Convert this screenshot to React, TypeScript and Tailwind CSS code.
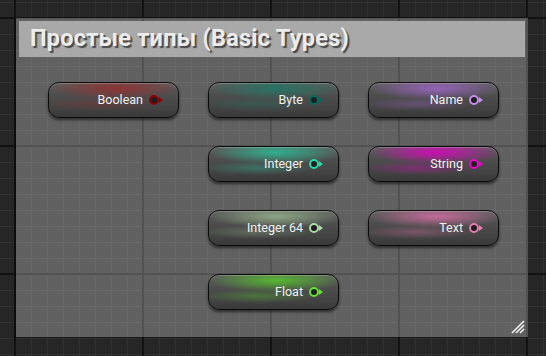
import React from "react";

type NodeDef = { label: string; glow: string; pin: string } | null;

const rows: NodeDef[][] = [
  [
    { label: "Boolean", glow: "150,45,45", pin: "#930000" },
    { label: "Byte", glow: "30,120,100", pin: "#006b5f" },
    { label: "Name", glow: "160,100,200", pin: "#c88cf2" },
  ],
  [
    null,
    { label: "Integer", glow: "40,190,150", pin: "#22dcaa" },
    { label: "String", glow: "225,0,195", pin: "#f500d0" },
  ],
  [
    null,
    { label: "Integer 64", glow: "150,180,140", pin: "#aadca4" },
    { label: "Text", glow: "215,110,165", pin: "#e67cb2" },
  ],
  [null, { label: "Float", glow: "85,200,40", pin: "#5ee62b" }, null],
];

function VarNode({ node }: { node: NonNullable<NodeDef> }) {
  const c = node.glow;
  return (
    <div
      className="relative h-[36px] w-[131px] rounded-[11px] border border-[#0c0c0c] shadow-[0_2px_3px_rgba(0,0,0,0.55),inset_0_1px_0_rgba(255,255,255,0.22)] flex items-center justify-end pr-[15px] overflow-hidden"
      style={{
        backgroundImage: `radial-gradient(ellipse 52% 34% at 52% 16%, rgba(${c},0.85) 0%, rgba(${c},0.4) 55%, rgba(${c},0) 100%), radial-gradient(ellipse 45% 20% at 38% 62%, rgba(${c},0.35) 0%, rgba(${c},0) 100%), linear-gradient(to bottom, #5e5e5e 0%, #4e4e4e 35%, #434343 75%, #393939 100%)`,
      }}
    >
      <span className="text-[12.5px] leading-none text-[#f2f2f2] font-['Roboto',sans-serif] mr-[6px]">
        {node.label}
      </span>
      <span className="flex items-center">
        <span
          className="block w-[10px] h-[10px] rounded-full border-2 bg-[#1e1e1e]"
          style={{ borderColor: node.pin }}
        />
        <svg width="4" height="6" viewBox="0 0 4 6" className="block">
          <path d="M0 0 L4 3 L0 6 Z" fill={node.pin} />
        </svg>
      </span>
    </div>
  );
}

export default function App() {
  return (
    <div className="relative w-[546px] h-[356px] overflow-hidden bg-[#262626] [background-image:linear-gradient(to_right,#121212_2px,transparent_2px),linear-gradient(to_bottom,#121212_2px,transparent_2px),linear-gradient(to_right,#313131_1px,transparent_1px),linear-gradient(to_bottom,#313131_1px,transparent_1px)] [background-size:128px_128px,128px_128px,16px_16px,16px_16px] [background-position:14px_17px,14px_17px,15px_2px,15px_2px] pt-[18px] pl-[16px]">
      <div className="relative w-[512px] h-[319px] bg-white/[0.27] shadow-[-1px_1px_1px_rgba(0,0,0,0.35)] flex flex-col p-[3px]">
        <div className="h-[36px] bg-[#a9a9a9] flex items-center pl-[11px]">
          <span className="text-[23.5px] tracking-[0.25px] font-bold leading-none text-[#ececec] font-['Roboto',sans-serif] [text-shadow:2px_2px_1px_rgba(40,40,40,0.75)]">
            Простые типы (Basic Types)
          </span>
        </div>
        <div className="grid grid-cols-[131px_131px_131px] gap-x-[29px] gap-y-[28px] mt-[25px] ml-[29px]">
          {rows.flat().map((n, i) =>
            n ? <VarNode key={i} node={n} /> : <div key={i} />
          )}
        </div>
        <svg
          width="14"
          height="14"
          viewBox="0 0 14 14"
          className="absolute right-[3px] bottom-[3px]"
        >
          <path d="M13 1 L1 13 M13 5 L5 13 M13 9 L9 13" stroke="#f0f0f0" strokeWidth="1.6" />
        </svg>
      </div>
    </div>
  );
}
